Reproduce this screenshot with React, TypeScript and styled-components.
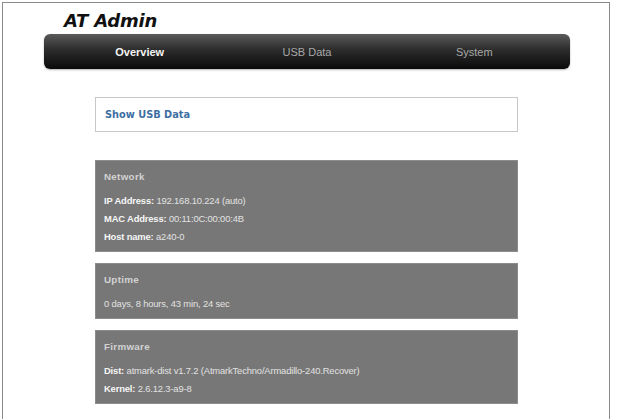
import React from 'react';
import styled, { createGlobalStyle } from 'styled-components';

const GlobalStyle = createGlobalStyle`
  html, body {
    margin: 0;
    padding: 0;
    background: #fff;
    font-family: "Liberation Sans", Arial, sans-serif;
  }
`;

const Frame = styled.div`
  box-sizing: border-box;
  margin: 2px 0 0 2px;
  width: 608px;
  min-height: 417px;
  border: 1px solid #8a8a8a;
  border-bottom: none;
  padding: 6px 0 0 41px;
`;

const Title = styled.h1`
  margin: 0 0 2px 20px;
  font-family: "DejaVu Sans", sans-serif;
  font-style: italic;
  font-weight: bold;
  font-size: 18px;
  line-height: 23px;
  color: #111;
  letter-spacing: -0.2px;
`;

const NavBar = styled.nav`
  width: 526px;
  height: 35px;
  box-sizing: border-box;
  padding: 0 12px;
  border-radius: 6px;
  background: linear-gradient(to bottom, #5a5a5a 0%, #2c2c2c 45%, #0a0a0a 100%);
  box-shadow: 0 1px 2px rgba(0, 0, 0, 0.3);
  display: grid;
  grid-template-columns: repeat(3, 1fr);
  align-items: center;
`;

const Tab = styled.a<{ $active?: boolean }>`
  text-align: center;
  font-size: 11px;
  font-weight: ${(p) => (p.$active ? 'bold' : 'normal')};
  color: ${(p) => (p.$active ? '#f4f4f4' : '#a8a8a8')};
  text-decoration: none;
`;

const Content = styled.main`
  width: 423px;
  margin: 28px 0 0 51px;
  display: flex;
  flex-direction: column;
`;

const LinkBox = styled.div`
  box-sizing: border-box;
  height: 35px;
  border: 1px solid #c8c8c8;
  display: flex;
  align-items: center;
  padding: 0 9px;
  margin-bottom: 28px;
`;

const LinkText = styled.a`
  font-family: "DejaVu Sans", sans-serif;
  font-weight: bold;
  font-size: 9.8px;
  color: #3e6fa3;
  text-decoration: none;
`;

const Panel = styled.section`
  box-sizing: border-box;
  background: #777;
  border: 1px solid #8c8c8c;
  padding: 9px 8px 5px;
  & + & {
    margin-top: 11px;
  }
`;

const PanelTitle = styled.h2`
  margin: 0 0 8px;
  font-size: 9.8px;
  line-height: 14px;
  font-weight: bold;
  color: #d2d2d2;
  letter-spacing: 0.3px;
`;

const Row = styled.div`
  font-size: 9.4px;
  line-height: 18px;
  color: #e2e2e2;
  letter-spacing: -0.15px;
`;

const Label = styled.b`
  color: #f6f6f6;
`;

type Item = { label?: string; value: string };

const panels: { title: string; items: Item[] }[] = [
  {
    title: 'Network',
    items: [
      { label: 'IP Address:', value: '192.168.10.224 (auto)' },
      { label: 'MAC Address:', value: '00:11:0C:00:00:4B' },
      { label: 'Host name:', value: 'a240-0' },
    ],
  },
  {
    title: 'Uptime',
    items: [{ value: '0 days, 8 hours, 43 min, 24 sec' }],
  },
  {
    title: 'Firmware',
    items: [
      { label: 'Dist:', value: 'atmark-dist v1.7.2 (AtmarkTechno/Armadillo-240.Recover)' },
      { label: 'Kernel:', value: '2.6.12.3-a9-8' },
    ],
  },
];

export default function App(): JSX.Element {
  return (
    <>
      <GlobalStyle />
      <Frame>
        <Title>AT Admin</Title>
        <NavBar>
          <Tab $active>Overview</Tab>
          <Tab>USB Data</Tab>
          <Tab>System</Tab>
        </NavBar>
        <Content>
          <LinkBox>
            <LinkText>Show USB Data</LinkText>
          </LinkBox>
          {panels.map((panel) => (
            <Panel key={panel.title}>
              <PanelTitle>{panel.title}</PanelTitle>
              {panel.items.map((item, i) => (
                <Row key={i}>
                  {item.label && <Label>{item.label}</Label>} {item.value}
                </Row>
              ))}
            </Panel>
          ))}
        </Content>
      </Frame>
    </>
  );
}
